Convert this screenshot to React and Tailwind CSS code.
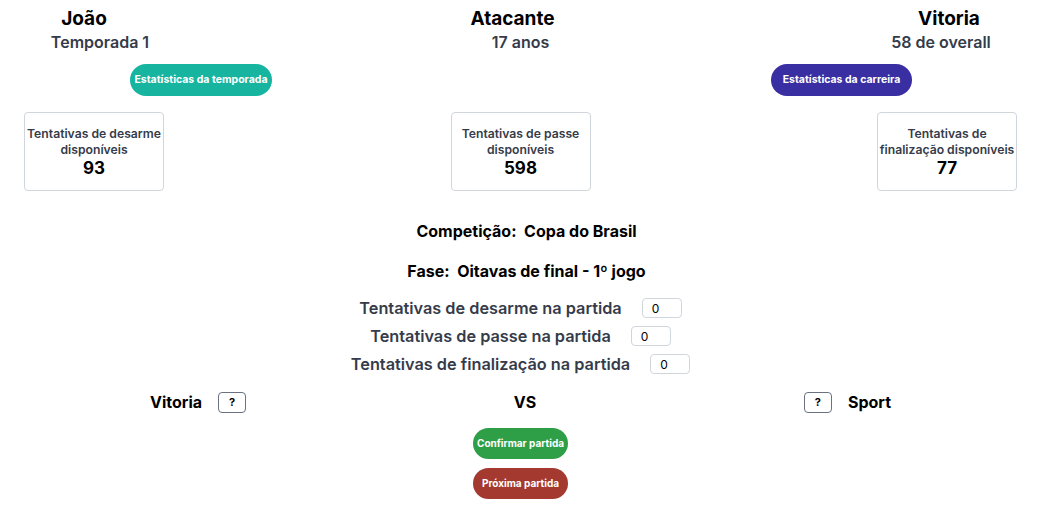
import React, { useState } from "react";

// cartões de tentativas disponíveis
const cards = [
  { lines: ["Tentativas de desarme", "disponíveis"], value: 93 },
  { lines: ["Tentativas de passe", "disponíveis"], value: 598 },
  { lines: ["Tentativas de", "finalização disponíveis"], value: 77 },
];

const StatCard = ({ lines, value }) => (
  <div className="w-[140px] h-[79px] border border-gray-300 rounded-[4px] flex flex-col items-center justify-center bg-white">
    {lines.map((l) => (
      <span
        key={l}
        className="block whitespace-nowrap text-[12.2px] leading-[16px] font-semibold text-[#353b4a]"
      >
        {l}
      </span>
    ))}
    <span className="block text-[17px] leading-[20px] font-bold text-black">
      {value}
    </span>
  </div>
);

const MatchRow = ({ label, value, onChange }) => (
  <div className="flex items-center justify-center h-[28px] gap-[20px]">
    <span className="text-[16.3px] font-semibold text-[#353b4a] whitespace-nowrap">
      {label}
    </span>
    <input
      type="text"
      value={value}
      onChange={(e) => onChange(e.target.value)}
      className="w-[40px] h-[20px] border border-gray-300 rounded-[4px] pl-[9px] text-[12px] text-black outline-none"
    />
  </div>
);

const App = () => {
  const [desarme, setDesarme] = useState("0");
  const [passe, setPasse] = useState("0");
  const [finalizacao, setFinalizacao] = useState("0");

  return (
    <div className="w-[1041px] min-h-[514px] bg-white font-['Inter','Noto_Sans',sans-serif] pt-[7px]">
      {/* Cabeçalho */}
      <div className="grid grid-cols-[200px_1fr_200px]">
        <div className="flex flex-col items-center">
          <span className="text-[19px] leading-[24px] font-bold text-black mr-[32px]">
            João
          </span>
          <span className="text-[16px] leading-[22px] font-semibold text-[#353b4a]">
            Temporada 1
          </span>
        </div>
        <div className="flex flex-col items-center">
          <span className="text-[19px] leading-[24px] font-bold text-black mr-[16px]">
            Atacante
          </span>
          <span className="text-[16px] leading-[22px] font-semibold text-[#353b4a]">
            17 anos
          </span>
        </div>
        <div className="flex flex-col items-center">
          <span className="text-[19px] leading-[24px] font-bold text-black ml-[16px]">
            Vitoria
          </span>
          <span className="text-[16px] leading-[22px] font-semibold text-[#353b4a]">
            58 de overall
          </span>
        </div>
      </div>

      {/* Botões de estatísticas */}
      <div className="flex justify-between pl-[130px] pr-[129px] mt-[11px]">
        <button className="w-[142px] h-[32px] rounded-full bg-[#17b5a0] text-white text-[10.5px] font-bold">
          Estatísticas da temporada
        </button>
        <button className="w-[141px] h-[32px] rounded-full bg-[#3a2ea3] text-white text-[10.5px] font-bold">
          Estatísticas da carreira
        </button>
      </div>

      {/* Cartões */}
      <div className="flex justify-between px-[24px] mt-[16px]">
        {cards.map((c) => (
          <StatCard key={c.value} lines={c.lines} value={c.value} />
        ))}
      </div>

      {/* Competição */}
      <div className="mt-[28px] text-center pl-[12px] text-[16px] leading-[24px] font-bold text-black">
        Competição:&nbsp; Copa do Brasil
      </div>
      <div className="mt-[16px] text-center pl-[12px] text-[16px] leading-[24px] font-bold text-black">
        Fase:&nbsp; Oitavas de final - 1º jogo
      </div>

      {/* Tentativas na partida */}
      <div className="mt-[11px]">
        <MatchRow label="Tentativas de desarme na partida" value={desarme} onChange={setDesarme} />
        <MatchRow label="Tentativas de passe na partida" value={passe} onChange={setPasse} />
        <MatchRow label="Tentativas de finalização na partida" value={finalizacao} onChange={setFinalizacao} />
      </div>

      {/* Placar */}
      <div className="flex justify-between items-center px-[150px] h-[22px] mt-[13px]">
        <div className="flex items-center gap-[16px]">
          <span className="text-[16px] font-bold text-black">Vitoria</span>
          <button className="w-[28px] h-[21px] border border-gray-500 rounded-[4px] text-[11px] font-bold text-black">
            ?
          </button>
        </div>
        <span className="text-[16px] font-bold text-black">VS</span>
        <div className="flex items-center gap-[16px]">
          <button className="w-[28px] h-[21px] border border-gray-500 rounded-[4px] text-[11px] font-bold text-black">
            ?
          </button>
          <span className="text-[16px] font-bold text-black">Sport</span>
        </div>
      </div>

      {/* Ações */}
      <div className="flex flex-col items-center mt-[15px] gap-[9px]">
        <button className="w-[95px] h-[31px] rounded-full bg-[#2e9e47] text-white text-[10px] font-bold">
          Confirmar partida
        </button>
        <button className="w-[95px] h-[31px] rounded-full bg-[#a3392f] text-white text-[10px] font-bold">
          Próxima partida
        </button>
      </div>
    </div>
  );
};

export default App;
